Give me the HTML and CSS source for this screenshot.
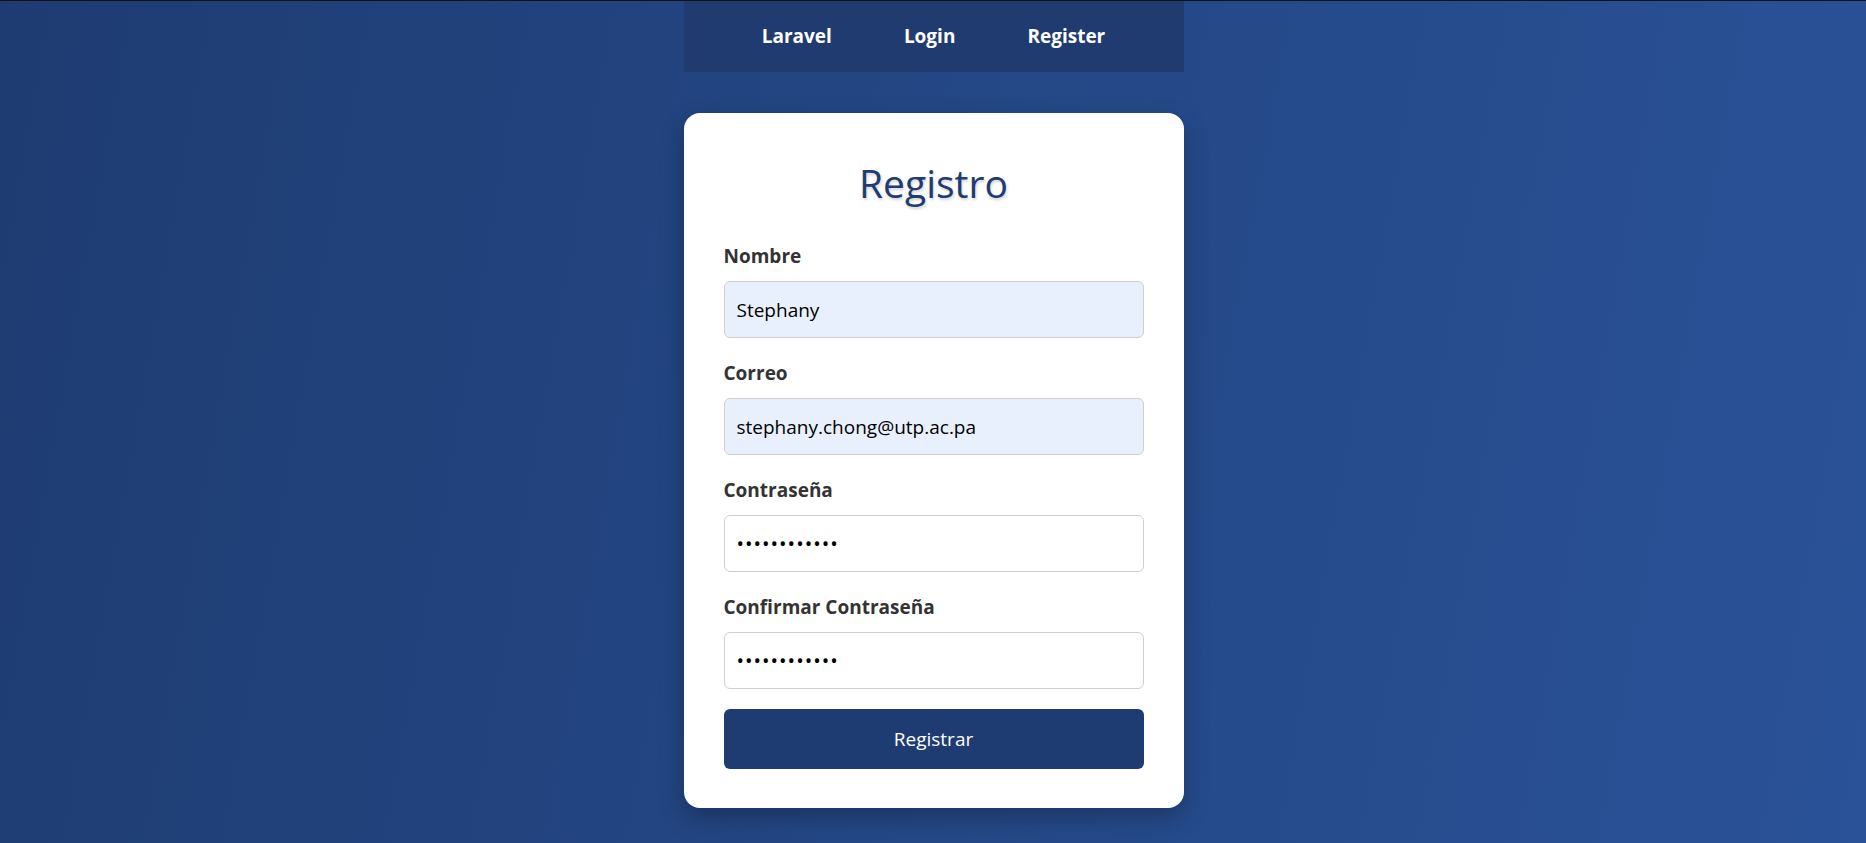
FILE: index.html
```html
<!DOCTYPE html>
<html lang="es">
<head>
<meta charset="utf-8">
<title>Registro</title>
<link rel="stylesheet" href="styles.css">
</head>
<body>
<div class="page">
  <nav class="topnav">
    <a class="nav-link" href="#">Laravel</a>
    <a class="nav-link" href="#">Login</a>
    <a class="nav-link" href="#">Register</a>
  </nav>
  <main class="card">
    <h2 class="card-title">Registro</h2>
    <form class="form">
      <div class="form-group">
        <label class="form-label">Nombre</label>
        <input class="form-input filled" type="text" value="Stephany">
      </div>
      <div class="form-group">
        <label class="form-label">Correo</label>
        <input class="form-input filled" type="email" value="stephany.chong@utp.ac.pa">
      </div>
      <div class="form-group">
        <label class="form-label">Contraseña</label>
        <input class="form-input secret" type="password" value="123456789012">
      </div>
      <div class="form-group">
        <label class="form-label">Confirmar Contraseña</label>
        <input class="form-input secret" type="password" value="123456789012">
      </div>
      <button class="btn-submit" type="button">Registrar</button>
    </form>
  </main>
</div>
</body>
</html>
```

FILE: styles.css
```css
html, body {
  margin: 0;
  padding: 0;
  height: 100%;
}

body {
  font-family: "Open Sans", "Noto Sans", sans-serif;
  background: linear-gradient(100deg, #1e3c72 0%, #2a5298 100%);
  border-top: 1px solid #111318;
  box-sizing: border-box;
  min-height: 100%;
  overflow: hidden;
}

.page {
  width: 500px;
  margin: 0 auto;
  padding-left: 1px;
}

.topnav {
  background: #1f3b70;
  display: flex;
  justify-content: center;
  gap: 72px;
  padding: 20px 0 21px;
}

.nav-link {
  color: #ffffff;
  text-decoration: none;
  font-weight: 700;
  font-size: 19px;
  line-height: 30px;
}

.card {
  display: block;
  margin-top: 41px;
  background: #ffffff;
  border-radius: 16px;
  padding: 40px 40px 39px;
  box-shadow: 0 10px 25px rgba(0, 0, 0, 0.25);
}

.card-title {
  margin: 3px 0 31px;
  text-align: center;
  font-weight: 400;
  font-size: 39px;
  line-height: 54px;
  color: #1e3c72;
  text-shadow: 1px 2px 3px rgba(0, 0, 0, 0.18);
}

.form {
  display: flex;
  flex-direction: column;
}

.form-group {
  display: flex;
  flex-direction: column;
  margin-bottom: 20px;
}

.form-label {
  font-weight: 700;
  font-size: 19px;
  line-height: 30px;
  color: #333333;
  margin-bottom: 10px;
}

.form-input {
  box-sizing: border-box;
  height: 57px;
  width: 100%;
  border: 1px solid #cfcfcf;
  border-radius: 6px;
  padding: 0 12px;
  font-family: "Open Sans", "Noto Sans", sans-serif;
  font-size: 19px;
  color: #000000;
  background: #ffffff;
  outline: none;
}

.form-input.filled {
  background: #e8f0fe;
}

.form-input.secret {
  font-size: 20px;
  letter-spacing: 1px;
}

.btn-submit {
  height: 60px;
  width: 100%;
  border: none;
  border-radius: 6px;
  background: #1e3c72;
  color: #ffffff;
  font-family: "Open Sans", "Noto Sans", sans-serif;
  font-size: 19px;
  cursor: pointer;
}
```
